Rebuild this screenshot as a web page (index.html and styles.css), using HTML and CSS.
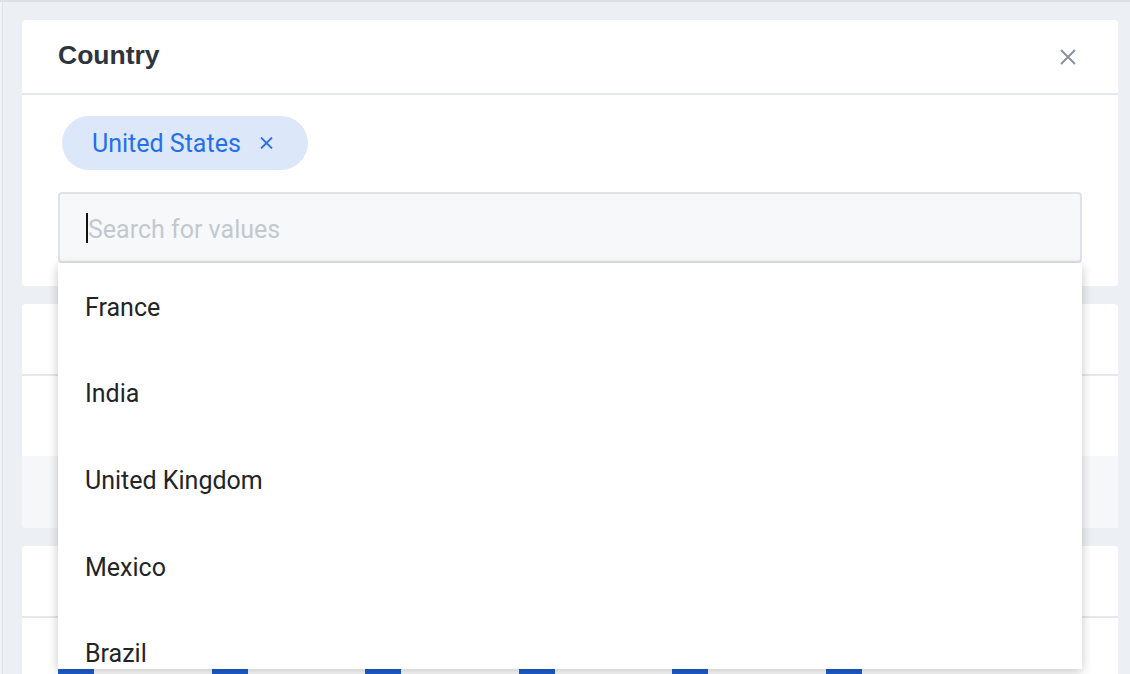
FILE: index.html
```html
<!DOCTYPE html>
<html lang="en">
<head>
  <meta charset="UTF-8">
  <meta name="viewport" content="width=device-width, initial-scale=1.0">
  <title>Country filter</title>
  <link rel="stylesheet" href="styles.css">
</head>
<body>
  <div class="page">
    <div class="rail"></div>
    <main class="stack">

      <section class="card filter">
        <header class="card-head">
          <h2>Country</h2>
          <button class="close" aria-label="Close">
            <svg width="16" height="16" viewBox="0 0 16 16"><path d="M1 1 L15 15 M15 1 L1 15" stroke="#8a909c" stroke-width="2" fill="none"/></svg>
          </button>
        </header>
        <div class="card-body">
          <div class="chips">
            <span class="chip">United States
              <svg width="13" height="12" viewBox="0 0 13 12"><path d="M1 0.5 L12 11.5 M12 0.5 L1 11.5" stroke="#2a6fe3" stroke-width="1.8" fill="none"/></svg>
            </span>
          </div>
          <div class="search">
            <div class="search-box">
              <span class="caret"></span>
              <input type="text" placeholder="Search for values">
            </div>
            <ul class="options">
              <li>France</li>
              <li>India</li>
              <li>United Kingdom</li>
              <li>Mexico</li>
              <li>Brazil</li>
            </ul>
          </div>
        </div>
      </section>

      <section class="card">
        <div class="row top"></div>
        <div class="row mid"></div>
        <div class="row shaded"></div>
      </section>

      <section class="card">
        <div class="row top"></div>
        <div class="bars">
          <span class="bar"></span>
          <span class="bar"></span>
          <span class="bar"></span>
          <span class="bar"></span>
          <span class="bar"></span>
          <span class="bar"></span>
        </div>
      </section>

    </main>
  </div>
</body>
</html>
```

FILE: styles.css
```css
html, body {
  margin: 0;
  height: 100%;
  overflow: hidden;
}
body {
  font-family: Roboto, 'Liberation Sans', sans-serif;
  background-color: #eceff3;
  border-top: 2px solid #dde1e7;
  box-sizing: border-box;
}
.page {
  display: flex;
  height: 100%;
}
.rail {
  width: 2px;
  flex: none;
  background-color: #f1f3f6;
  border-right: 1px solid #dee2e7;
}
.stack {
  flex: 1;
  display: flex;
  flex-direction: column;
  gap: 18px;
  padding: 18px 12px 0 19px;
}
.card {
  background-color: white;
  border-radius: 4px;
  flex: none;
}
.filter {
  position: relative;
  z-index: 2;
}
.card-head {
  height: 73px;
  display: flex;
  align-items: center;
  justify-content: space-between;
  padding: 0 42px 0 36px;
  border-bottom: 2px solid #e4e7eb;
}
.card-head h2 {
  margin: 0 0 3px;
  font-family: 'Liberation Sans', Arial, sans-serif;
  font-size: 26.5px;
  font-weight: bold;
  color: #2e343e;
}
.close {
  background: none;
  border: none;
  padding: 0;
  display: flex;
  cursor: pointer;
}
.card-body {
  padding: 21px 36px 23px;
}
.chips {
  display: flex;
  padding-left: 4px;
  margin-bottom: 22px;
}
.chip {
  display: inline-flex;
  align-items: center;
  gap: 19px;
  height: 54px;
  padding: 0 35px 0 30px;
  border-radius: 27px;
  background-color: #dce7fa;
  color: #2570e8;
  font-size: 25px;
  line-height: 1;
}
.search {
  position: relative;
}
.search-box {
  display: flex;
  align-items: center;
  height: 67px;
  padding: 0 26px;
  background-color: #f7f8fa;
  border: 2px solid #dfe2e7;
  border-radius: 4px;
}
.caret {
  width: 2px;
  height: 30px;
  background-color: #111;
  flex: none;
}
.search-box input {
  flex: 1;
  border: none;
  background: none;
  outline: none;
  padding: 4px 0 0;
  font-family: Roboto, sans-serif;
  font-size: 25px;
  color: #333;
}
.search-box input::placeholder {
  color: #c3c8cf;
}
.options {
  position: absolute;
  top: 100%;
  left: 0;
  right: 0;
  height: 406px;
  margin: 0;
  padding: 1px 0 0;
  box-sizing: border-box;
  list-style: none;
  overflow: hidden;
  background-color: white;
  box-shadow: 0 3px 10px rgba(0, 0, 0, 0.22);
}
.options li {
  height: 86.6px;
  display: flex;
  align-items: center;
  padding: 0 27px;
  font-size: 25px;
  color: #222428;
}
.row.top {
  height: 70px;
  border-bottom: 2px solid #e4e7eb;
}
.row.mid {
  height: 80px;
}
.row.shaded {
  height: 72px;
  background-color: #f6f7f9;
  border-radius: 0 0 4px 4px;
}
.bars {
  display: flex;
  gap: 117.6px;
  padding: 51px 36px 0;
}
.bar {
  width: 36px;
  height: 40px;
  background-color: #1d5fcf;
}
```
